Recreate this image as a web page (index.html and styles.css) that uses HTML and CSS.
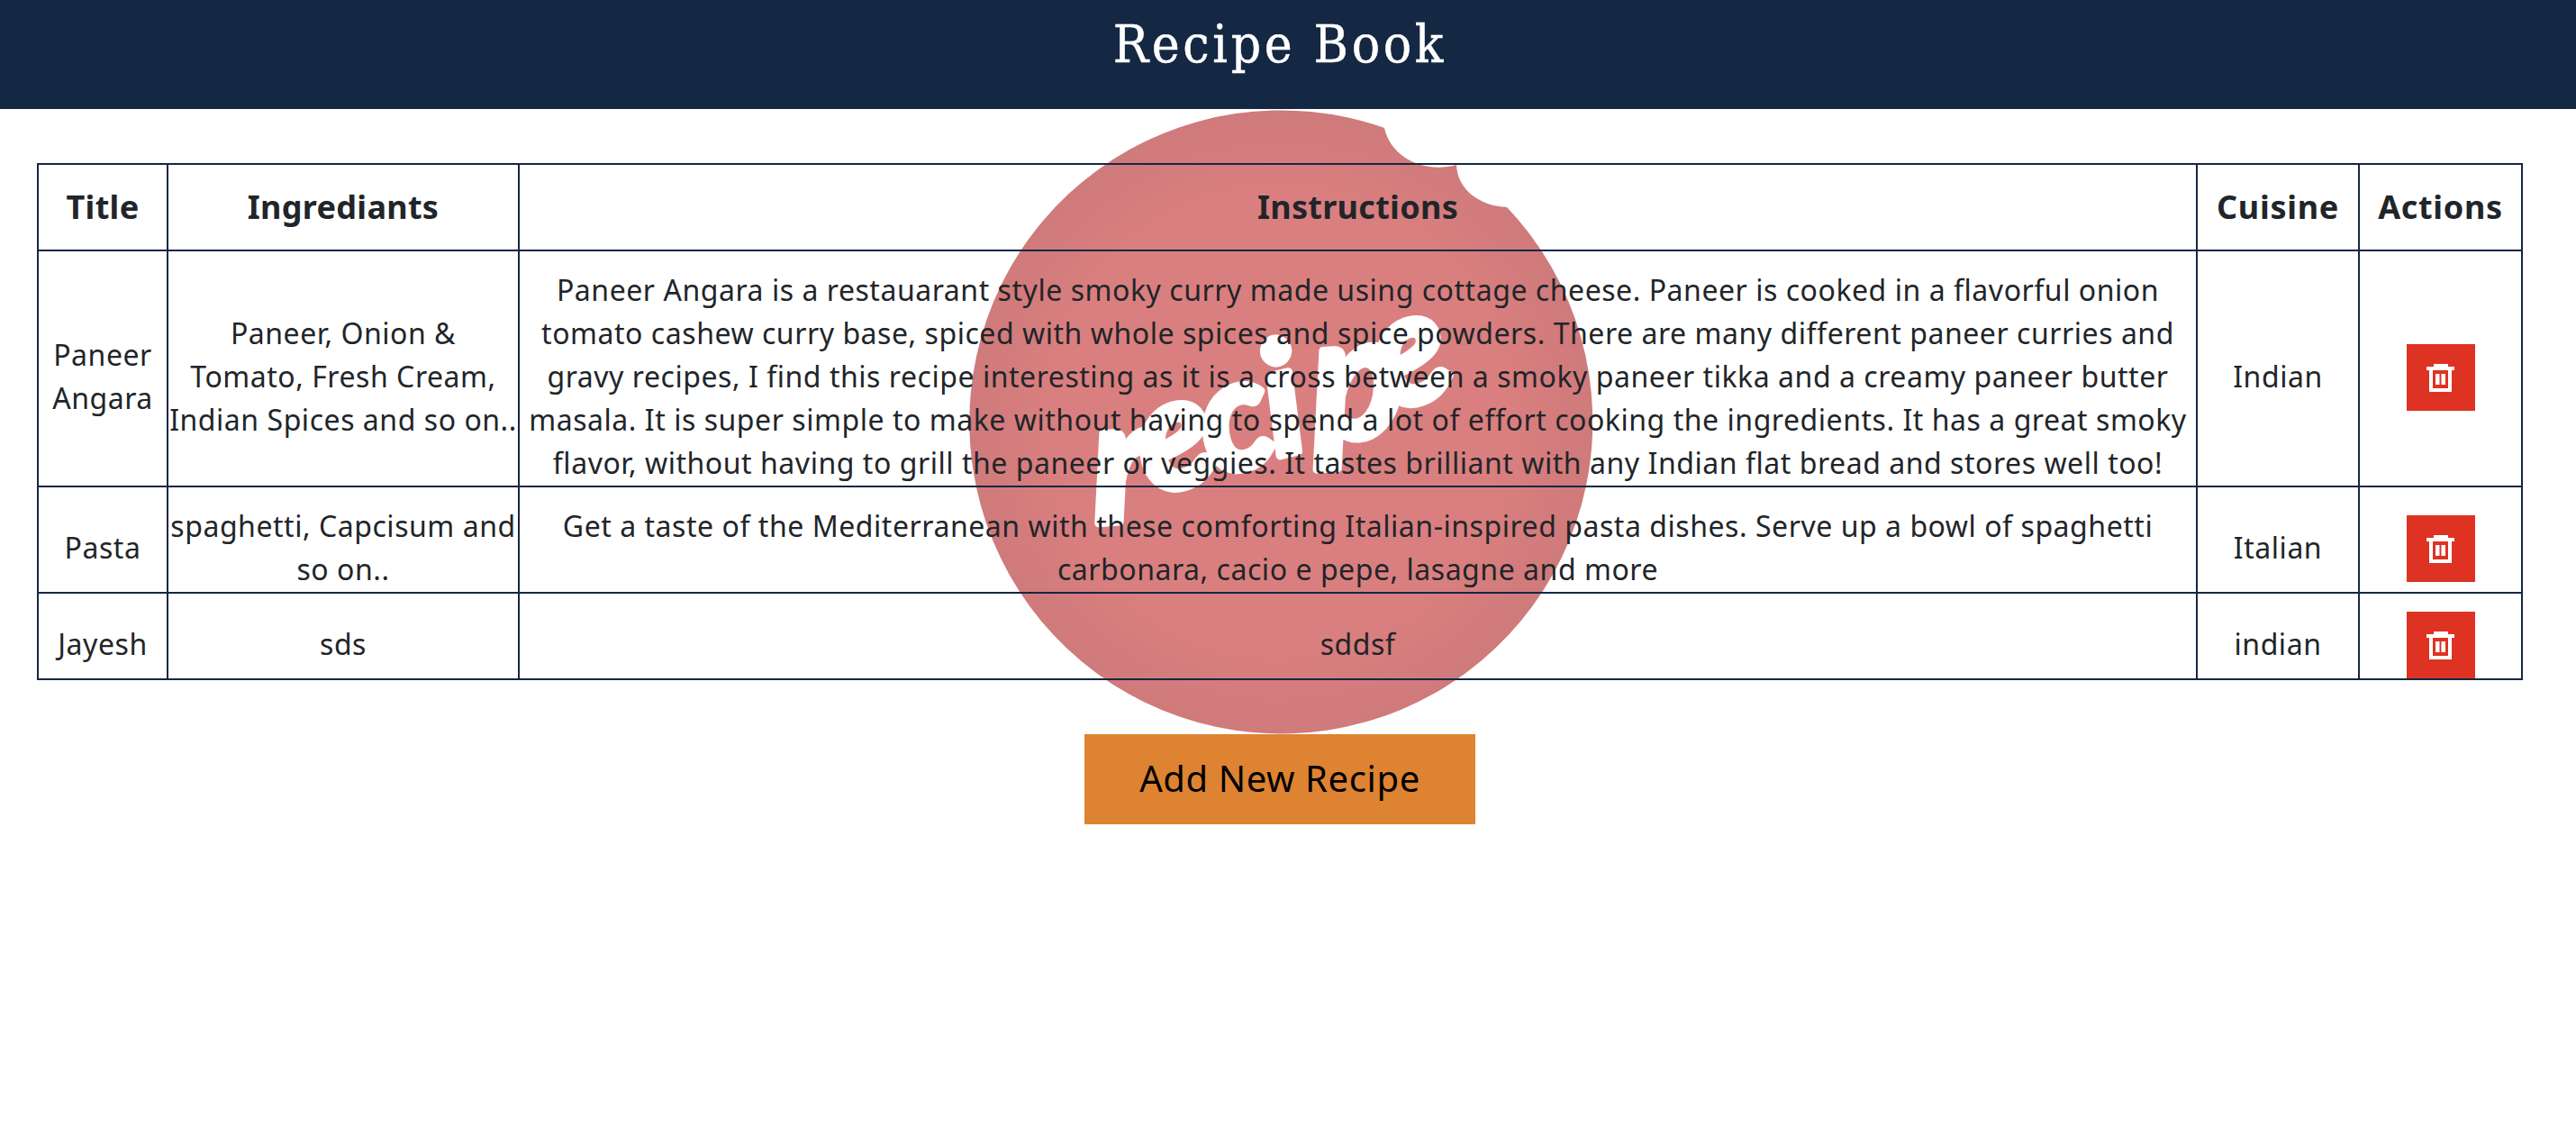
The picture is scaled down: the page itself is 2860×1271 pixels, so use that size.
FILE: index.html
```html
<!DOCTYPE html>
<html lang="en">
<head>
<meta charset="utf-8">
<title>Recipe Book</title>
<link rel="stylesheet" href="styles.css">
</head>
<body>
<header class="header"><h1 class="header-title">Recipe Book</h1></header>
<main class="main">
  <svg class="logo" viewBox="0 0 694 694" aria-hidden="true">
    <defs>
      <radialGradient id="plate" cx="347" cy="347" r="346" gradientUnits="userSpaceOnUse">
        <stop offset="0.72" stop-color="#da7f7f"/>
        <stop offset="1" stop-color="#cf7a7b"/>
      </radialGradient>
    </defs>
    <path fill="url(#plate)" d="M463 21A346 346 0 1 0 599 109C570 108 544 90 543 62C508 72 470 54 463 21Z"/>
    <text class="logo-word" x="142 206 274 343 386 469" y="460 430 408 386 368 337" rotate="-4 -18 -16 -14 -4 -20"><tspan class="logo-tall">r</tspan>eci<tspan class="logo-tall">p</tspan>e</text>
  </svg>
  <table class="recipes">
    <colgroup><col class="col-title"><col class="col-ingredients"><col class="col-instructions"><col class="col-cuisine"><col class="col-actions"></colgroup>
    <thead>
      <tr><th>Title</th><th>Ingrediants</th><th>Instructions</th><th class="tight">Cuisine</th><th class="tight">Actions</th></tr>
    </thead>
    <tbody>
      <tr>
        <td>Paneer<br>Angara</td>
        <td>Paneer, Onion &amp;<br>Tomato, Fresh Cream,<br>Indian Spices and so on..</td>
        <td>Paneer Angara is a restauarant style smoky curry made using cottage cheese. Paneer is cooked in a flavorful onion<br>tomato cashew curry base, spiced with whole spices and spice powders. There are many different paneer curries and<br>gravy recipes, I find this recipe interesting as it is a cross between a smoky paneer tikka and a creamy paneer butter<br>masala. It is super simple to make without having to spend a lot of effort cooking the ingredients. It has a great smoky<br>flavor, without having to grill the paneer or veggies. It tastes brilliant with any Indian flat bread and stores well too!</td>
        <td>Indian</td>
        <td class="actions"><button class="delete" aria-label="Delete"><svg class="trash" viewBox="0 0 32 32"><path d="M8 0h16v3h7v4h-3v24H3V7H0V3h8zM7 7v20h17V7zM10 11h4.500v12h-4.500zM16.500 11h4.500v12h-4.500z" fill-rule="evenodd"/></svg></button></td>
      </tr>
      <tr>
        <td>Pasta</td>
        <td>spaghetti, Capcisum and<br>so on..</td>
        <td>Get a taste of the Mediterranean with these comforting Italian-inspired pasta dishes. Serve up a bowl of spaghetti<br>carbonara, cacio e pepe, lasagne and more</td>
        <td>Italian</td>
        <td class="actions"><button class="delete" aria-label="Delete"><svg class="trash" viewBox="0 0 32 32"><path d="M8 0h16v3h7v4h-3v24H3V7H0V3h8zM7 7v20h17V7zM10 11h4.500v12h-4.500zM16.500 11h4.500v12h-4.500z" fill-rule="evenodd"/></svg></button></td>
      </tr>
      <tr>
        <td>Jayesh</td>
        <td>sds</td>
        <td>sddsf</td>
        <td>indian</td>
        <td class="actions"><button class="delete" aria-label="Delete"><svg class="trash" viewBox="0 0 32 32"><path d="M8 0h16v3h7v4h-3v24H3V7H0V3h8zM7 7v20h17V7zM10 11h4.500v12h-4.500zM16.500 11h4.500v12h-4.500z" fill-rule="evenodd"/></svg></button></td>
      </tr>
    </tbody>
  </table>
  <button class="add">Add New Recipe</button>
</main>
</body>
</html>
```
FILE: styles.css
```css
* { box-sizing: border-box; }
body {
  margin: 0;
  background: #fff;
  color: #212529;
  font-family: "Noto Sans", "Open Sans", sans-serif;
  font-size: 32px;
  line-height: 48px;
  letter-spacing: 0.54px;
}
.header {
  height: 121px;
  padding-right: 18px;
  background: #142743;
  color: #fff;
  text-align: center;
}
.header-title {
  margin: 0;
  font-family: "DejaVu Serif Condensed", "DejaVu Serif", serif;
  font-size: 58px;
  font-weight: 400;
  font-stretch: condensed;
  line-height: 98px;
  letter-spacing: 3.7px;
  -webkit-text-stroke: 0.5px #fff;
}
.main {
  position: relative;
  width: 2842px;
  padding-top: 60px;
  display: flex;
  flex-direction: column;
  align-items: center;
}
/* Plate artwork lies behind the table */
.logo {
  position: absolute;
  z-index: -1;
  top: 0;
  left: 1074px;
  width: 694px;
  height: 694px;
}
.logo-word {
  fill: #fff;
  stroke: #fff;
  stroke-width: 9px;
  stroke-linejoin: round;
  font: italic 700 172px "Lato", sans-serif;
  letter-spacing: 0;
}
.logo-tall { font-size: 192px; }
.recipes {
  width: 2760px;
  table-layout: fixed;
  border-collapse: collapse;
  text-align: center;
}
.col-title { width: 144px; }
.col-ingredients { width: 390px; }
.col-instructions { width: 1863px; }
.col-cuisine { width: 180px; }
.col-actions { width: 181px; }
.recipes th,
.recipes td {
  padding: 0;
  border: 2px solid #142743;
  white-space: nowrap;
}
.recipes th { height: 96px; font-size: 36px; letter-spacing: 0.3px; }
.recipes .tight { letter-spacing: 0.7px; }
.recipes td { padding: 19px 0 1px; }
.recipes .actions { padding: 20px 0 0; }
.delete {
  display: block;
  width: 76px;
  height: 74px;
  margin: 0 auto;
  padding: 22px;
  border: 0;
  background: #de3323;
}
.trash { display: block; width: 32px; height: 32px; fill: #fff; }
.add {
  width: 434px;
  height: 100px;
  margin-top: 60px;
  padding: 0 0 2px;
  border: 0;
  background: #de8331;
  color: #000;
  font: inherit;
  font-size: 40px;
  letter-spacing: 0.6px;
}
```
